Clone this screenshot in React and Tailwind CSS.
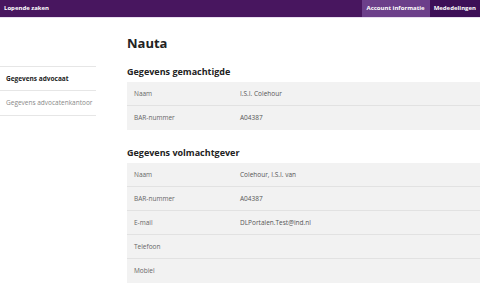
import React from "react";

const Row = ({ label, value, last }) => (
  <div className={`flex items-center h-[24px] bg-[#f2f2f2] ${last ? "" : "border-b border-[#e2e2e2]"}`}>
    <div className="w-[113px] pl-[7px] text-[6.5px] text-[#666]">{label}</div>
    <div className="text-[6.5px] text-[#555]">{value}</div>
  </div>
);

export default function App() {
  return (
    <div className="w-[480px] h-[297px] bg-white overflow-hidden" style={{ fontFamily: '"Open Sans", sans-serif' }}>
      <div className="flex h-[17px] bg-[#48165f] border-b border-[#e9dff0] box-content">
        <div className="flex items-center pl-[4px] text-[6px] font-bold text-white flex-1">Lopende zaken</div>
        <div className="flex items-center px-[5px] bg-[#6c3f8a] text-[6px] font-bold text-white">Account informatie</div>
        <div className="flex items-center px-[4px] bg-[#3d0f57] text-[6px] font-bold text-white">Mededelingen</div>
      </div>
      <div className="flex">
        <div className="w-[96px] pt-[48px]">
          <div className="border-t border-[#e6e6e6]">
            <div className="h-[24px] flex items-center pl-[6px] text-[6.5px] font-bold text-[#222] border-b border-[#e6e6e6]">Gegevens advocaat</div>
            <div className="h-[25px] flex items-center pl-[6px] text-[6.5px] text-[#888] border-b border-[#e6e6e6]">Gegevens advocatenkantoor</div>
          </div>
        </div>
        <div className="flex-1 pl-[31px]">
          <div className="pt-[15px] text-[13px] font-bold text-[#222] leading-[20px]">Nauta</div>
          <div className="pt-[13px] pb-[4px] text-[9px] font-bold text-[#222] leading-[12px]">Gegevens gemachtigde</div>
          <Row label="Naam" value="I.S.I. Colehour" />
          <Row label="BAR-nummer" value="A04387" last />
          <div className="pt-[17px] pb-[4px] text-[9px] font-bold text-[#222] leading-[12px]">Gegevens volmachtgever</div>
          <Row label="Naam" value="Colehour, I.S.I. van" />
          <Row label="BAR-nummer" value="A04387" />
          <Row label="E-mail" value="DLPortalen.Test@ind.nl" />
          <Row label="Telefoon" value="" />
          <Row label="Mobiel" value="" last />
        </div>
      </div>
    </div>
  );
}
